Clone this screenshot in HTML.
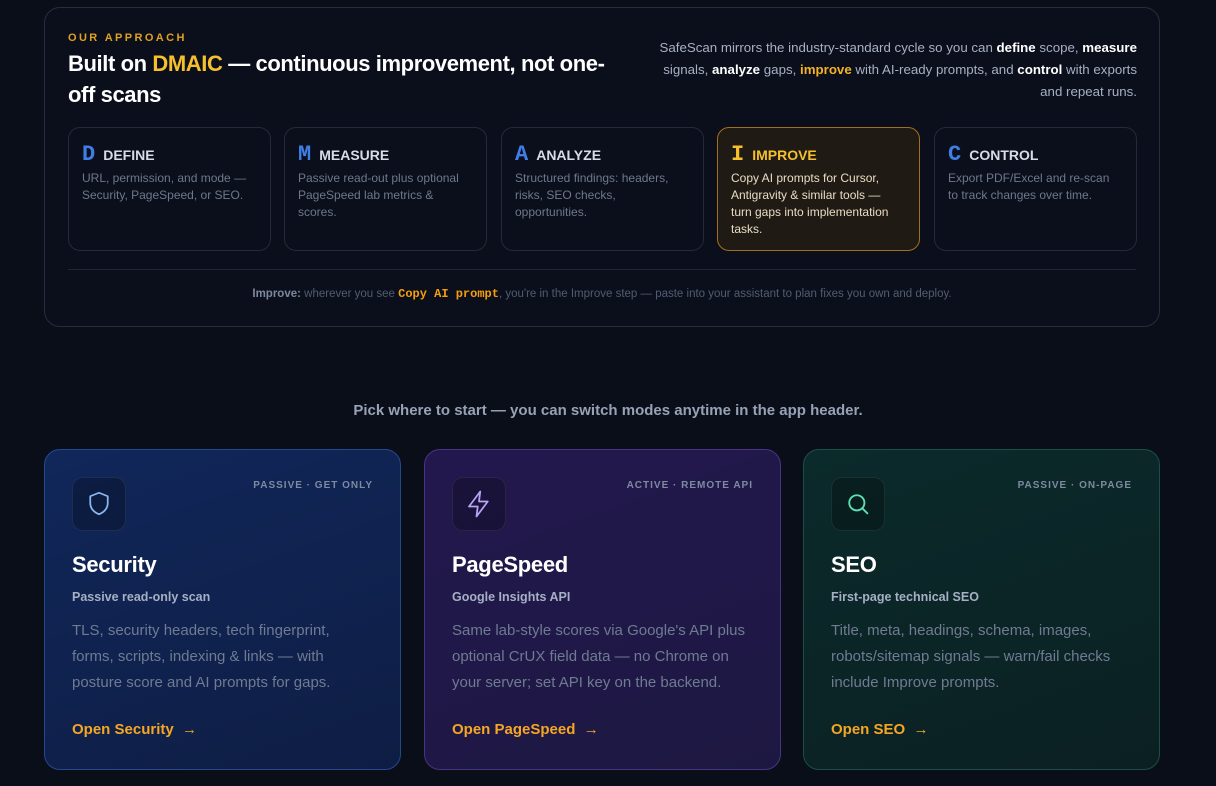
<!DOCTYPE html>
<html><head><meta charset="utf-8"><style>
*{box-sizing:border-box;margin:0;padding:0}
body{width:1216px;height:786px;overflow:hidden;background:#0a0e19;font-family:"Liberation Sans","DejaVu Sans",sans-serif;color:#e5e7eb;position:relative}
.panel{position:absolute;left:44px;top:7px;width:1116px;height:320px;border:1px solid #262d3d;border-radius:16px;background:#0b0f1c}
.eyebrow{position:absolute;left:23px;top:24px;font-size:11px;font-weight:bold;letter-spacing:2.4px;color:#e0a020}
h2{position:absolute;left:23px;top:40px;width:548px;font-size:22px;line-height:31px;font-weight:bold;color:#fff;letter-spacing:-0.4px}
h2 span{color:#f5c02c}
.intro{position:absolute;right:22px;top:29px;width:490px;text-align:right;font-size:13.3px;line-height:22px;color:#a7b0c2}
.intro b{color:#fff}.intro b.y{color:#f5b324}
.step{position:absolute;top:119px;width:203px;height:124px;border:1px solid #232a3a;border-radius:12px;padding:15px 18px 13px 13px}
.step .h{display:flex;align-items:baseline;gap:8px;font-size:14px;font-weight:bold;color:#d7dce6}
.step .l{font-family:"Liberation Mono",monospace;font-size:22px;font-weight:bold;color:#3f7ee6;line-height:24px}
.step p{font-size:12px;line-height:17px;color:#6e788c;margin-top:3px}
.step.on{border-color:#a2701c;background:#1f1a14}
.step.on .l,.step.on .h{color:#f5c02c}.step.on p{color:#e9dcc2}
.rule{position:absolute;left:23px;right:23px;top:261px;border-top:1px solid #1f2636}
.note{position:absolute;left:0;right:0;top:279px;text-align:center;font-size:11.5px;color:#525c70}
.note b{color:#7d889c}.note code{font-family:"Liberation Mono",monospace;color:#f59e0b;font-weight:bold;font-size:12px}
.pick{position:absolute;top:402px;left:0;right:0;text-align:center;font-size:15px;font-weight:bold;color:#98a2b6}
.card{position:absolute;top:449px;width:357px;height:321px;border-radius:16px;padding:27px 27px}
.c1{left:44px;background:linear-gradient(160deg,#11275a,#0e1d44);border:1px solid #24498e}
.c2{left:424px;background:linear-gradient(160deg,#23184e,#1d1842);border:1px solid #4a3285}
.c3{left:803px;background:linear-gradient(160deg,#0b2a2b,#0b2022);border:1px solid #1b4f45}
.ic{width:54px;height:54px;border-radius:11px;border:1px solid rgba(255,255,255,.08);background:rgba(0,0,0,.25);display:flex;align-items:center;justify-content:center}
.tag{position:absolute;right:27px;top:30px;font-size:10px;letter-spacing:1px;color:#7d8aa0;font-weight:bold}
.card h3{font-size:22px;font-weight:bold;color:#fff;margin-top:21px;letter-spacing:-0.3px}
.card .s{font-size:12.5px;font-weight:bold;color:#a6b0c4;margin-top:12px}
.card .d{font-size:15px;line-height:26px;color:#6f7b92;margin-top:14px}
.card .o{position:absolute;left:27px;top:271px;font-size:15px;font-weight:bold;color:#f5a623}
</style></head><body>
<div class="panel">
<div class="eyebrow">OUR APPROACH</div>
<h2>Built on <span>DMAIC</span> — continuous improvement, not one-off scans</h2>
<div class="intro">SafeScan mirrors the industry-standard cycle so you can <b>define</b> scope, <b>measure</b> signals, <b>analyze</b> gaps, <b class="y">improve</b> with AI-ready prompts, and <b>control</b> with exports and repeat runs.</div>
<div class="step" style="left:23px"><div class="h"><span class="l">D</span>DEFINE</div><p>URL, permission, and mode — Security, PageSpeed, or SEO.</p></div>
<div class="step" style="left:239px"><div class="h"><span class="l">M</span>MEASURE</div><p>Passive read-out plus optional PageSpeed lab metrics &amp; scores.</p></div>
<div class="step" style="left:456px"><div class="h"><span class="l">A</span>ANALYZE</div><p>Structured findings: headers, risks, SEO checks, opportunities.</p></div>
<div class="step on" style="left:672px"><div class="h"><span class="l">I</span>IMPROVE</div><p>Copy AI prompts for Cursor, Antigravity &amp; similar tools — turn gaps into implementation tasks.</p></div>
<div class="step" style="left:889px"><div class="h"><span class="l">C</span>CONTROL</div><p>Export PDF/Excel and re-scan to track changes over time.</p></div>
<div class="rule"></div>
<div class="note"><b>Improve:</b> wherever you see <code>Copy AI prompt</code>, you're in the Improve step — paste into your assistant to plan fixes you own and deploy.</div>
</div>
<div class="pick">Pick where to start — you can switch modes anytime in the app header.</div>
<div class="card c1"><div class="ic"><svg width="30" height="30" viewBox="0 0 24 24" fill="none" stroke="#8ab8f0" stroke-width="1.4" stroke-linejoin="round"><path d="M12 3l7 2.8v5.4c0 4.3-3 7.6-7 9-4-1.4-7-4.7-7-9V5.8z"/></svg></div><div class="tag">PASSIVE · GET ONLY</div><h3>Security</h3><div class="s">Passive read-only scan</div><div class="d">TLS, security headers, tech fingerprint, forms, scripts, indexing &amp; links — with posture score and AI prompts for gaps.</div><div class="o">Open Security &nbsp;→</div></div>
<div class="card c2"><div class="ic"><svg width="30" height="30" viewBox="0 0 24 24" fill="none" stroke="#b8a4f4" stroke-width="1.4" stroke-linejoin="round"><path d="M13 2L4 14h7l-1 8 9-12h-7z"/></svg></div><div class="tag">ACTIVE · REMOTE API</div><h3>PageSpeed</h3><div class="s">Google Insights API</div><div class="d">Same lab-style scores via Google's API plus optional CrUX field data — no Chrome on your server; set API key on the backend.</div><div class="o">Open PageSpeed &nbsp;→</div></div>
<div class="card c3"><div class="ic"><svg width="28" height="28" viewBox="0 0 24 24" fill="none" stroke="#5ee0b0" stroke-width="1.6" stroke-linecap="round"><circle cx="11" cy="11" r="6.5"/><path d="M16 16l4 4"/></svg></div><div class="tag">PASSIVE · ON-PAGE</div><h3>SEO</h3><div class="s">First-page technical SEO</div><div class="d">Title, meta, headings, schema, images, robots/sitemap signals — warn/fail checks include Improve prompts.</div><div class="o">Open SEO &nbsp;→</div></div>
</body></html>
